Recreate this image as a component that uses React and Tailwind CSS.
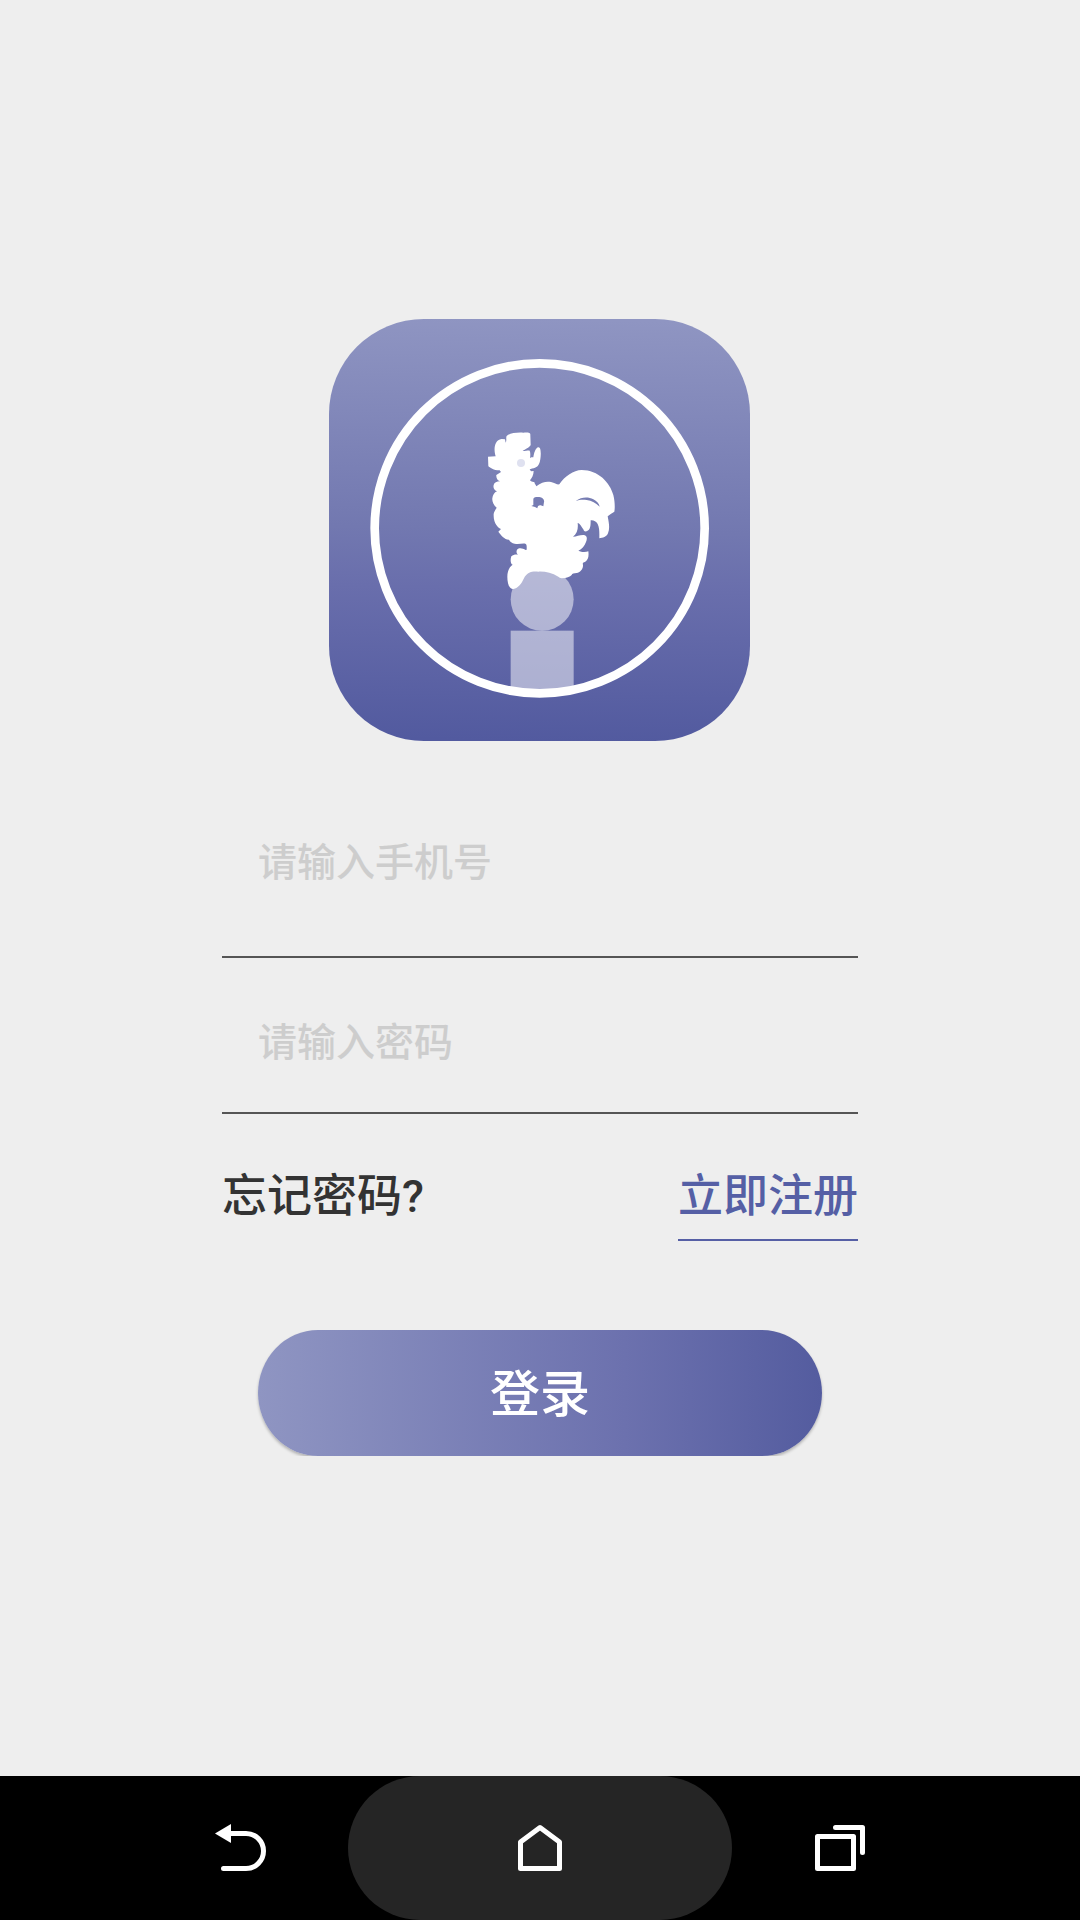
import React, { useState } from 'react';

const Logo = () => (
    <svg viewBox="27 27 1266 1266" className="w-[422px] h-[422px] mx-auto" aria-hidden="true">
        <defs>
            <linearGradient id="logoFill" x1="0.51" y1="0" x2="0.49" y2="1">
                <stop offset="0" stopColor="#8f95c2" />
                <stop offset="0.5" stopColor="#7278b0" />
                <stop offset="0.64" stopColor="#696eac" />
                <stop offset="1" stopColor="#525a9f" />
            </linearGradient>
        </defs>
        <rect x="27" y="27" width="1263" height="1266" rx="285" fill="url(#logoFill)" />
        {/* ball and post */}
        <circle cx="666.5" cy="868" r="94.5" fill="#fff" fillOpacity="0.5" />
        <rect x="572" y="962" width="189" height="180" fill="#fff" fillOpacity="0.5" />
        <circle cx="659" cy="655" r="495" fill="none" stroke="#fff" strokeWidth="26" />
        {/* rooster */}
        <g transform="translate(450 330)">
            <path
                fill="#fff"
                fillRule="evenodd"
                d="M54 110L77 109C71 92 71 60 95 57L105 58L107 68C111 62 107 52 110 48C120 39 140 37 160 38C175 37 182 38 181 45L182 75C178 83 165 88 158 93C168 93 176 90 179 92C182 98 181 108 180 115C183 110 187 112 190 112C192 100 196 85 204 82C212 80 213 95 212 108C211 125 207 140 195 143C190 145 182 146 179 148L183 154L191 153C191 165 185 175 180 181C184 184 187 187 193 186C193 190 197 193 199 199C215 186 230 183 243 186C255 189 262 195 268 193C285 168 310 151 335 150C385 150 420 188 430 225C435 245 435 265 433 275C427 280 420 282 413 289C417 310 420 325 414 340C410 350 398 354 388 355C388 340 389 325 383 312C378 303 370 300 362 301C362 315 362 330 350 334C343 336 341 331 340 328C334 320 330 310 323 309C325 325 322 340 309 350C320 350 330 344 342 345C352 346 352 358 348 366C344 378 336 388 325 392C335 397 348 396 355 394C357 408 355 420 345 426C337 428 338 431 339 435C340 448 330 458 320 459C312 460 306 460 305 465C300 470 290 475 275 475C270 474 268 472 265 470C245 458 225 454 205 455C185 453 170 458 162 475C155 490 145 505 130 507C118 509 112 490 112 470C112 455 118 440 128 434C122 432 120 420 124 409C130 403 138 403 145 404C140 402 138 395 141 389C148 382 158 385 167 390L170 389C170 380 171 372 166 371C155 370 145 373 134 371C126 369 120 365 117 359C105 360 92 345 85 335L93 327C85 325 70 310 71 285C70 278 75 272 80 263C70 255 66 243 67 235C68 225 73 217 81 214C72 210 69 203 71 195C73 188 80 184 90 184C82 182 78 172 79 165L93 156L89 151C75 152 58 143 55 138Z
                M190 255L190 240C190 230 198 231 208 231C218 232 224 240 222 246L220 259L212 256C206 255 203 259 202 265L195 261L184 258Z
                M317 243C335 230 355 230 370 238C380 243 388 252 389 260C378 250 365 242 350 240C338 239 328 239 317 243Z"
            />
            <circle cx="153" cy="129" r="12" fill="#dfe1f0" />
        </g>
    </svg>
);

const BackIcon = () => (
    <svg viewBox="0 0 54 48" className="w-[54px] h-12" fill="none" stroke="#fff" strokeWidth="5" strokeLinecap="round">
        <path d="M14 9.5H33A17.5 17.5 0 0 1 33 44.5H10.5" />
        <path d="M2 9.5L18 0V19Z" fill="#fff" stroke="none" />
    </svg>
);

const HomeIcon = () => (
    <svg viewBox="0 0 54 48" className="w-[54px] h-12" fill="none" stroke="#fff" strokeWidth="5" strokeLinejoin="round">
        <path d="M7.5 44.5V18L27 3.5L46.5 18V44.5Z" />
    </svg>
);

const RecentIcon = () => (
    <svg viewBox="0 0 54 48" className="w-[54px] h-12" fill="none" stroke="#fff" strokeWidth="5" strokeLinecap="round" strokeLinejoin="round">
        <path d="M4.5 12.5H40.5V44.5H4.5Z" />
        <path d="M22.5 3.5H49.5V28.5" />
    </svg>
);

const App = () => {
    const [formData, setFormData] = useState({ phone: '', password: '' });

    const handleChange = (e) => {
        setFormData({ ...formData, [e.target.name]: e.target.value });
    };

    const handleSubmit = (e) => {
        e.preventDefault();
    };

    return (
        <div className="min-h-screen flex flex-col bg-[#eeeeee] font-[Roboto,'Noto_Sans_CJK_SC',sans-serif] font-medium">
            <main className="flex-1 w-full max-w-[636px] mx-auto pt-[319px]">
                <Logo />
                <form onSubmit={handleSubmit} className="flex flex-col pt-[25px]">
                    <input
                        type="tel"
                        name="phone"
                        aria-label="请输入手机号"
                        value={formData.phone}
                        onChange={handleChange}
                        placeholder="请输入手机号"
                        className="w-full h-48 px-9 pt-1 border-b-2 border-[#555555] text-[39px] text-[#333333] placeholder:text-[#cdcdcd] outline-none"
                    />
                    <input
                        type="password"
                        name="password"
                        aria-label="请输入密码"
                        value={formData.password}
                        onChange={handleChange}
                        placeholder="请输入密码"
                        className="w-full h-36 mt-3 px-9 pt-1 border-b-2 border-[#555555] text-[39px] text-[#333333] placeholder:text-[#cdcdcd] outline-none"
                    />
                    <div className="flex items-start justify-between mt-[51px] text-[45px] leading-[64px]">
                        <a href="#forgot" className="text-[#333333]">忘记密码?</a>
                        <a href="#register" className="pb-[10px] border-b-2 border-[#555fa5] text-[#555fa5]">立即注册</a>
                    </div>
                    <div className="mt-[89px] px-9 overflow-hidden">
                        <button
                            type="submit"
                            className="block w-full h-[126px] pt-1 rounded-[60px/63px] bg-linear-to-r from-[#8f95c2] via-[#6c71ae] via-65% to-[#545c9f] text-[50px] text-white shadow-[0_2px_3px_rgba(0,0,0,0.25)]"
                        >
                            登录
                        </button>
                    </div>
                </form>
            </main>
            <nav className="flex justify-center h-36 bg-black">
                <button type="button" aria-label="返回" className="w-54 flex items-center justify-center">
                    <BackIcon />
                </button>
                <button type="button" aria-label="主页" className="w-96 flex items-center justify-center rounded-full bg-[#252525]">
                    <HomeIcon />
                </button>
                <button type="button" aria-label="最近任务" className="w-54 flex items-center justify-center">
                    <RecentIcon />
                </button>
            </nav>
        </div>
    );
};

export default App;
